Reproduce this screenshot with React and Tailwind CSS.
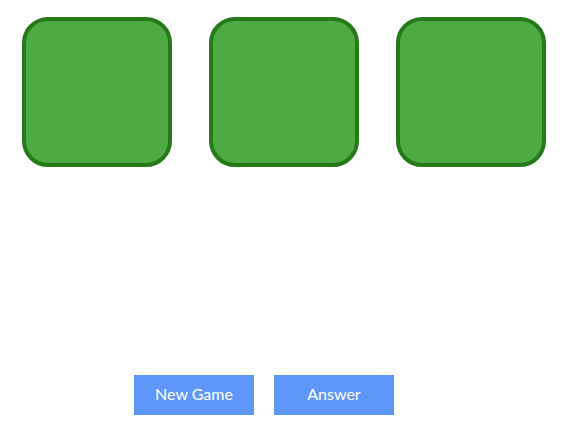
import React from "react";

function Card() {
  return (
    <div className="w-[150px] h-[150px] rounded-[26px] border-[4px] border-[#267a19] bg-[#4eaa42]" />
  );
}

export default function App() {
  const cards = [0, 1, 2];
  return (
    <div className="w-[567px] h-[439px] bg-white font-['Lato',sans-serif]">
      <div className="flex justify-center gap-[37px] pt-[17px]">
        {cards.map((c) => (
          <Card key={c} />
        ))}
      </div>
      <div className="flex gap-5 pl-[134px] mt-[208px]">
        <button className="w-[120px] h-[40px] pb-[3px] bg-[#5e96fa] text-white text-[16px]">
          New Game
        </button>
        <button className="w-[120px] h-[40px] pb-[3px] bg-[#5e96fa] text-white text-[16px]">
          Answer
        </button>
      </div>
    </div>
  );
}
